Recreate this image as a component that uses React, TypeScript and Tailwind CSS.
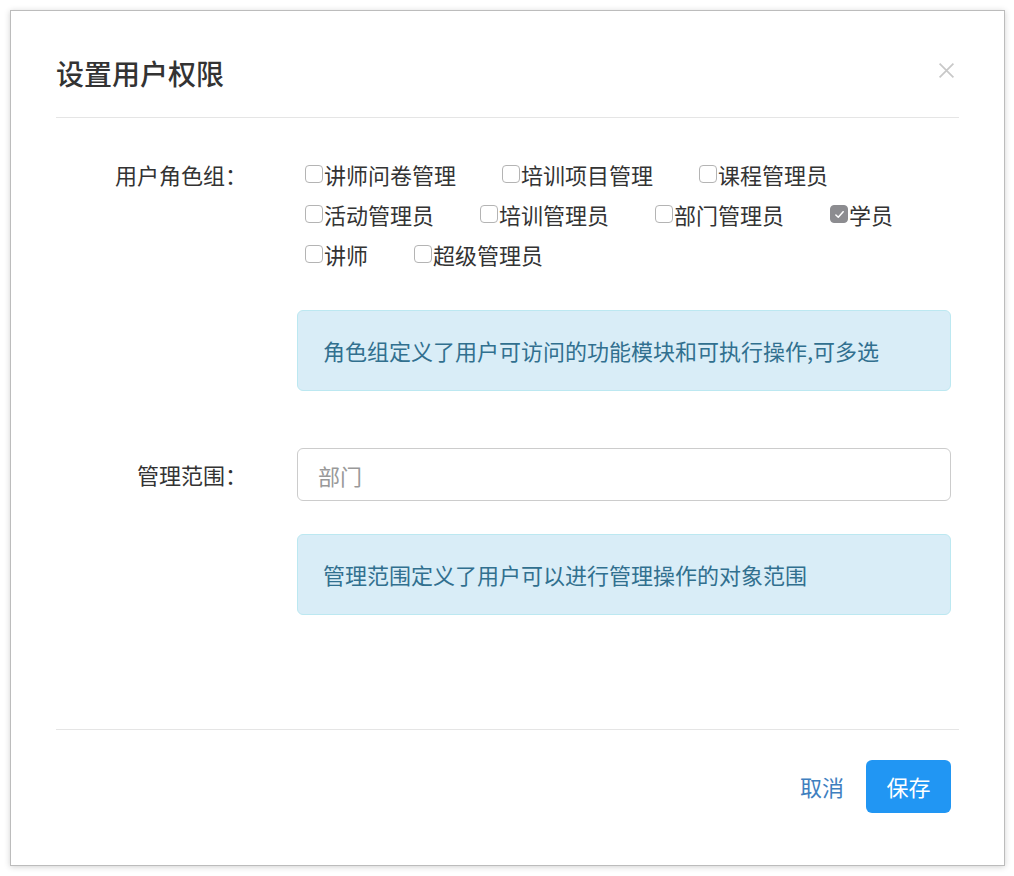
import React, { useState } from 'react';

const font = { fontFamily: '"Noto Sans CJK SC", "Noto Sans", sans-serif' };

const roles = [
  { name: '讲师问卷管理', checked: false },
  { name: '培训项目管理', checked: false },
  { name: '课程管理员', checked: false },
  { name: '活动管理员', checked: false },
  { name: '培训管理员', checked: false },
  { name: '部门管理员', checked: false },
  { name: '学员', checked: true },
  { name: '讲师', checked: false },
  { name: '超级管理员', checked: false },
];

const Checkbox: React.FC<{ label: string; checked: boolean; onToggle: () => void }> = ({ label, checked, onToggle }) => (
  <label className="flex items-center h-10 cursor-pointer" onClick={onToggle}>
    <span
      className={`shrink-0 w-[18px] h-[18px] rounded-[4px] border flex items-center justify-center mr-[1px] ${
        checked ? 'bg-[#8c8c90] border-[#8c8c90]' : 'bg-white border-[#b4b4b4]'
      }`}
    >
      {checked && (
        <svg viewBox="0 0 16 16" className="w-[13px] h-[13px]">
          <path d="M3.5 8.5l3 3 6-7" fill="none" stroke="white" strokeWidth="1.8" strokeLinecap="round" strokeLinejoin="round" />
        </svg>
      )}
    </span>
    <span>{label}</span>
  </label>
);

export default function App() {
  const [checked, setChecked] = useState(roles.map(r => r.checked));

  return (
    <div className="w-[1014px] h-[876px] bg-white pt-[10px] pl-[10px]" style={font}>
      <div className="w-[995px] h-[856px] bg-white border border-[#bcbcbc] shadow-[0_1px_6px_rgba(0,0,0,0.18)] flex flex-col px-[45px] text-[#333]">
        {/* Header */}
        <div className="flex items-start justify-between pt-[42px] pb-[24px] border-b border-[#e5e5e5]">
          <h1 className="text-[28px] leading-[40px] font-medium text-[#333]">设置用户权限</h1>
          <button className="mt-[9px] mr-[4px]">
            <svg viewBox="0 0 16 16" className="w-[17px] h-[17px]">
              <path d="M1.5 1.5l13 13M14.5 1.5l-13 13" stroke="#c8c8c8" strokeWidth="1.6" />
            </svg>
          </button>
        </div>

        {/* Body */}
        <div className="flex-1 pt-[36px] pr-[8px] text-[22px]">
          <div className="flex">
            <div className="w-[191px] text-right leading-10 shrink-0">用户角色组：</div>
            <div className="ml-[50px] flex-1">
              <div className="flex flex-wrap gap-x-[46px] pl-[8px] leading-10">
                {roles.map((r, i) => (
                  <Checkbox
                    key={r.name}
                    label={r.name}
                    checked={checked[i]}
                    onToggle={() => setChecked(c => c.map((v, j) => (j === i ? !v : v)))}
                  />
                ))}
              </div>
              <div className="mt-[36px] h-[81px] flex items-center pl-[25px] bg-[#d9edf7] border border-[#bce8f1] rounded-[6px] text-[#31708f]">
                角色组定义了用户可访问的功能模块和可执行操作,可多选
              </div>
            </div>
          </div>

          <div className="flex mt-[57px]">
            <div className="w-[191px] text-right leading-[53px] shrink-0">管理范围：</div>
            <div className="ml-[50px] flex-1">
              <input
                className="w-full h-[53px] border border-[#cccccc] rounded-[6px] px-[20px] outline-none placeholder:text-[#999]"
                placeholder="部门"
              />
              <div className="mt-[33px] h-[81px] flex items-center pl-[25px] bg-[#d9edf7] border border-[#bce8f1] rounded-[6px] text-[#31708f]">
                管理范围定义了用户可以进行管理操作的对象范围
              </div>
            </div>
          </div>
        </div>

        {/* Footer */}
        <div className="border-t border-[#e5e5e5] pt-[30px] pb-[52px] pr-[8px] flex justify-end items-center text-[22px]">
          <button className="text-[#3f7fbf] mr-[22px]">取消</button>
          <button className="w-[85px] h-[53px] rounded-[6px] bg-[#2196f3] text-white">保存</button>
        </div>
      </div>
    </div>
  );
}
